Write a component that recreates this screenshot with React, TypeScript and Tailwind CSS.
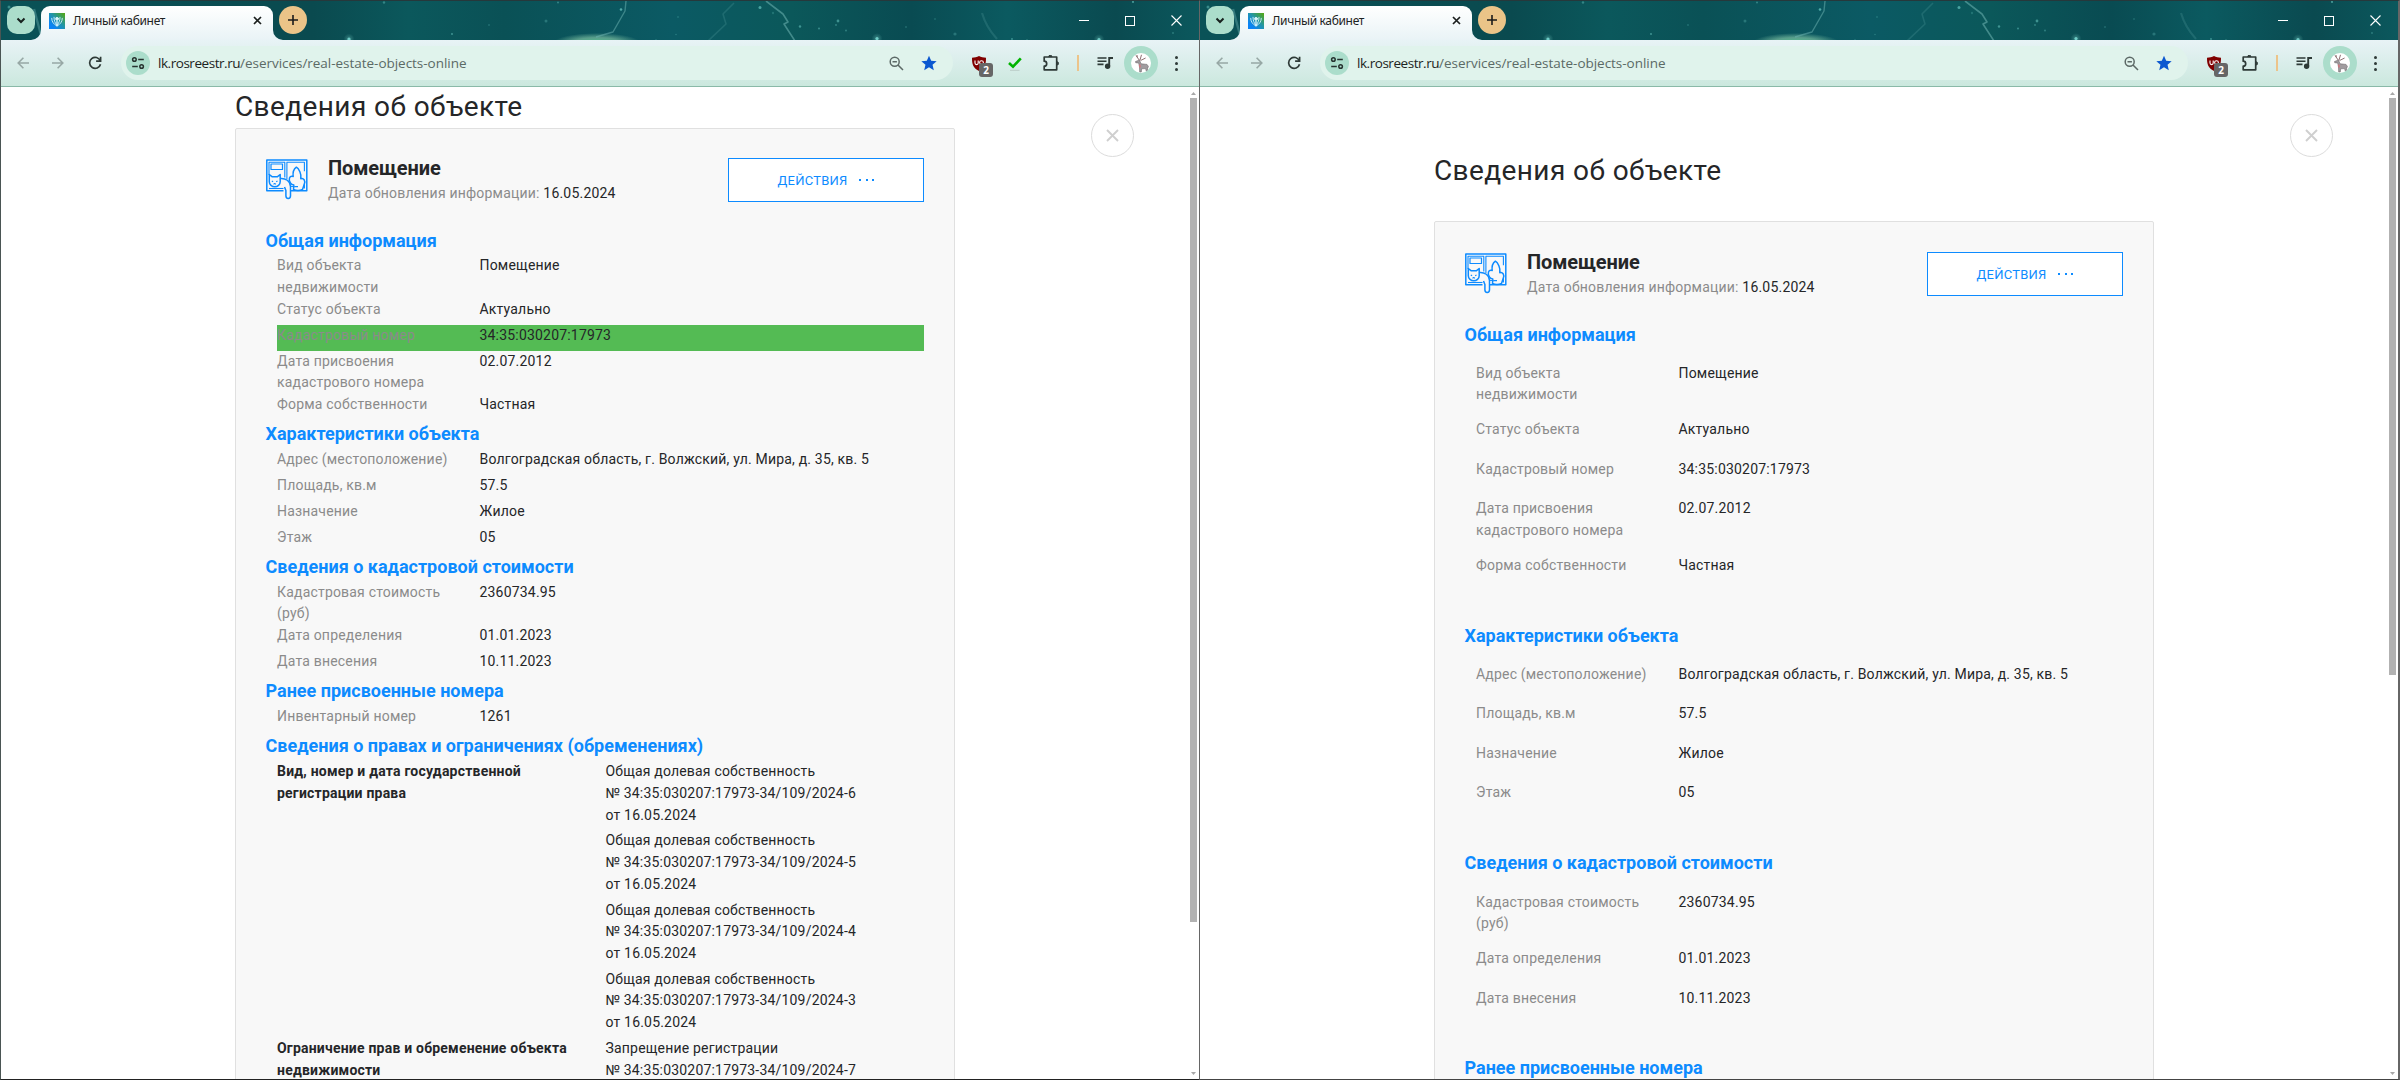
import type { ReactNode } from "react";

type Row = { label: ReactNode; value: string; marked?: boolean };
type Section = { title: string; rows: Row[] };

const sections: Section[] = [
  {
    title: "Общая информация",
    rows: [
      { label: <>Вид объекта<br />недвижимости</>, value: "Помещение" },
      { label: "Статус объекта", value: "Актуально" },
      { label: "Кадастровый номер", value: "34:35:030207:17973", marked: true },
      { label: <>Дата присвоения<br />кадастрового номера</>, value: "02.07.2012" },
      { label: "Форма собственности", value: "Частная" },
    ],
  },
  {
    title: "Характеристики объекта",
    rows: [
      { label: "Адрес (местоположение)", value: "Волгоградская область, г. Волжский, ул. Мира, д. 35, кв. 5" },
      { label: "Площадь, кв.м", value: "57.5" },
      { label: "Назначение", value: "Жилое" },
      { label: "Этаж", value: "05" },
    ],
  },
  {
    title: "Сведения о кадастровой стоимости",
    rows: [
      { label: <>Кадастровая стоимость<br />(руб)</>, value: "2360734.95" },
      { label: "Дата определения", value: "01.01.2023" },
      { label: "Дата внесения", value: "10.11.2023" },
    ],
  },
  {
    title: "Ранее присвоенные номера",
    rows: [{ label: "Инвентарный номер", value: "1261" }],
  },
];

const rights = [6, 5, 4, 3];

/* ---------- browser chrome ---------- */

const stars: [number, number, number, number][] = [
  [348, 38, 1.6, 0.8], [383, 1.5, 1.2, 0.35], [451, 33, 0.9, 0.5], [488, 24, 1, 0.2], [545, 20, 1.5, 0.25],
  [557, 1.5, 1, 0.35], [620, 8.5, 1.3, 0.6], [677, 16, 0.8, 0.3], [675, 33.5, 0.7, 0.3], [655, 39, 0.7, 0.4],
  [759, 6.5, 1.5, 0.55], [772, 12, 1.2, 0.2], [799, 25.5, 1.2, 0.45], [818, 27.5, 1, 0.4], [837, 20, 1.4, 0.45],
  [835, 24, 0.9, 0.35], [845, 29.5, 0.9, 0.35], [876, 37.5, 1.6, 0.8], [905, 26, 0.8, 0.35], [934, 18, 0.8, 0.3],
  [954, 33, 1.6, 0.25], [1011, 38, 0.9, 0.45], [1026, 39, 0.8, 0.4], [1098, 38.5, 1.6, 0.8], [1132, 1, 1.1, 0.5],
  [1172, 32, 0.9, 0.3], [8, 6, 1.5, 0.4],
];

function Sky() {
  return (
    <svg className="absolute inset-0 h-full w-full" viewBox="0 0 1198 39" preserveAspectRatio="none" aria-hidden>
      <defs>
        <linearGradient id="sky" x1="0" x2="1" y1="0" y2="0">
          <stop offset="0" stopColor="#0a5257" />
          <stop offset="0.26" stopColor="#0a4a4f" />
          <stop offset="0.34" stopColor="#0b585c" />
          <stop offset="0.42" stopColor="#0a5156" />
          <stop offset="0.56" stopColor="#0b5a64" />
          <stop offset="0.66" stopColor="#0b585a" />
          <stop offset="0.76" stopColor="#094b52" />
          <stop offset="0.84" stopColor="#0b5a60" />
          <stop offset="0.93" stopColor="#0a4a50" />
          <stop offset="1" stopColor="#0b585d" />
        </linearGradient>
        <radialGradient id="glow">
          <stop offset="0" stopColor="#4fc08b" />
          <stop offset="0.55" stopColor="#79bd9f" stopOpacity="0.7" />
          <stop offset="1" stopColor="#79bd9f" stopOpacity="0" />
        </radialGradient>
        <radialGradient id="halo">
          <stop offset="0" stopColor="#7fd6cc" stopOpacity="0.4" />
          <stop offset="1" stopColor="#7fd6cc" stopOpacity="0" />
        </radialGradient>
      </defs>
      <rect width="1198" height="39" fill="url(#sky)" />
      <ellipse cx="596" cy="42" rx="44" ry="10" fill="url(#glow)" />
      <g fill="none" stroke="#6fb5b3" strokeLinejoin="round">
        <path d="M625 0 624 10 612 31 605 33 595 36" strokeWidth="1.4" opacity="0.5" />
        <path d="M733 2 722 13 725 23 707 40" strokeWidth="1.6" opacity="0.2" />
        <path d="M765 0 782 13 787 21 783 23 794 40" strokeWidth="1.6" opacity="0.55" />
        <path d="M981 12Q985 26 996 38" strokeWidth="2.2" opacity="0.2" />
        <path d="M33 8 40 34" strokeWidth="2.4" opacity="0.4" />
      </g>
      {stars.map(([x, y, r, o]) => (
        <g key={x}>
          {o > 0.7 && <circle cx={x} cy={y} r={r * 3.4} fill="url(#halo)" />}
          <circle cx={x} cy={y} r={r} fill="#7ee0d8" opacity={o} />
        </g>
      ))}
    </svg>
  );
}

function Favicon() {
  return (
    <svg width="16" height="16" viewBox="0 0 16 16" className="shrink-0">
      <defs>
        <linearGradient id="fav" x1="0" y1="1" x2="1" y2="0">
          <stop offset="0.2" stopColor="#0a83f5" />
          <stop offset="0.55" stopColor="#2295a8" />
          <stop offset="0.95" stopColor="#4fa61c" />
        </linearGradient>
      </defs>
      <rect width="16" height="16" fill="url(#fav)" />
      <g fill="none" stroke="#d9f4fb" strokeWidth="0.9" strokeLinecap="round">
        <path d="M8 13C4.600 11.300 2.700 8.600 2.700 5.300M8 13c3.400-1.700 5.300-4.400 5.300-7.700" />
        <path d="M8 12.500C6 10 5 7.500 5 4.300M8 12.500c2-2.500 3-5 3-8.200" />
        <path d="M8 12V8" strokeWidth="1.300" />
        <circle cx="8" cy="5.800" r="1.400" fill="#d9f4fb" />
      </g>
    </svg>
  );
}

function TabStrip() {
  return (
    <div className="relative h-[39px] shrink-0">
      <Sky />
      <div className="relative flex h-full items-start pt-[5px]">
        <div className="ml-[6px] flex h-7 w-7 items-center justify-center rounded-[10px] bg-[#abddcb]">
          <svg width="10" height="7" viewBox="0 0 10 7" fill="none" stroke="#16201d" strokeWidth="2">
            <path d="M1.500 1.500 5 5l3.500-3.500" />
          </svg>
        </div>
        <div className="relative ml-[6px] flex h-[34px] w-[232px] items-center rounded-t-[9px] bg-linear-to-b from-white to-[#e9f3f6] pr-[11px] pb-[4px] pl-2">
          <svg className="absolute bottom-0 -left-[10px]" width="10" height="10" viewBox="0 0 10 10" fill="#e9f3f6">
            <path d="M10 0v10H0A10 10 0 0 0 10 0" />
          </svg>
          <svg className="absolute -right-[10px] bottom-0" width="10" height="10" viewBox="0 0 10 10" fill="#e9f3f6">
            <path d="M0 0v10h10A10 10 0 0 1 0 0" />
          </svg>
          <Favicon />
          <span className="ml-2 flex-1 font-['Noto_Sans',sans-serif] text-[12px] leading-4 tracking-[-0.34px] whitespace-nowrap text-[#1d2322]">
            Личный кабинет
          </span>
          <svg width="9" height="9" viewBox="0 0 9 9" stroke="#1b1f1e" strokeWidth="1.700" className="mb-[1px]">
            <path d="M1 1l7 7M8 1 1 8" />
          </svg>
        </div>
        <div className="ml-[6px] flex h-7 w-7 items-center justify-center rounded-full bg-[#ebc488]">
          <svg width="10" height="10" viewBox="0 0 10 10" stroke="#1b1b1b" strokeWidth="1.600">
            <path d="M5 0v10M0 5h10" />
          </svg>
        </div>
        <div className="mt-[9px] mr-[17px] ml-auto flex items-center gap-9 text-white">
          <span className="h-px w-[10px] bg-white" />
          <span className="h-[10px] w-[10px] border border-white" />
          <svg width="11" height="11" viewBox="0 0 11 11" stroke="#fff" strokeWidth="1.100">
            <path d="M.5.5l10 10M10.500.5l-10 10" />
          </svg>
        </div>
      </div>
    </div>
  );
}

function Arrow({ back }: { back?: boolean }) {
  return (
    <svg width="12" height="12" viewBox="0 0 12 12" fill="none" stroke="#97a8a5" strokeWidth="1.600" className={back ? "" : "rotate-180"}>
      <path d="M12 6H1.200M6.400.8 1.200 6l5.200 5.200" />
    </svg>
  );
}

function Deer() {
  return (
    <svg width="20" height="20" viewBox="0 0 20 20" className="rounded-full">
      <rect width="20" height="20" fill="#fff" />
      <g fill="#a09c9f" stroke="#6f6a6d" strokeWidth="0.600">
        <path d="M4.500 8.500 8.500 7l1.500 3.800 6 .6 1.400 2-.8 2 .3 3h-1.500l-.8-2.800-4 .2-.3 3.200H8.700l-.2-5-.8-4-3-.3z" />
      </g>
      <path d="M8.300 7.200 5 2.500M9 7l1.500-5.200M9.600 7.500l5-2.500M6.200 4.200 6 2" stroke="#8d6f72" strokeWidth="1" fill="none" />
      <path d="M8.600 11.500l.6 3" stroke="#d2757c" strokeWidth="1.500" />
    </svg>
  );
}

function Toolbar({ hasCheck }: { hasCheck?: boolean }) {
  return (
    <div className="flex h-[47px] shrink-0 items-center border-b border-[#8ab9a8] bg-linear-to-b from-[#e8f3f6] to-[#cbe8de]">
      <div className="flex w-[120px] shrink-0 items-center pl-4">
        <Arrow back />
        <span className="ml-[23px]"><Arrow /></span>
        <svg width="14" height="14" viewBox="0 0 14 14" fill="none" stroke="#2e3a37" strokeWidth="1.700" className="ml-6">
          <path d="M12.300 4.900A5.500 5.500 0 1 0 12.500 8.200" />
          <path d="M12.600.7v4.500H8.100" />
        </svg>
      </div>
      <div className="flex h-[34px] flex-1 items-center rounded-full bg-[#e0f3ec] pr-4 pl-[5px]">
        <span className="flex h-6 w-6 items-center justify-center rounded-full bg-[#abddcb]">
          <svg width="14" height="14" viewBox="0 0 14 14" fill="none" stroke="#26322f" strokeWidth="1.500">
            <circle cx="3.400" cy="3.500" r="1.800" />
            <path d="M7.200 3.500h5.600M1.200 10.500h5.600" />
            <circle cx="10.600" cy="10.500" r="1.800" />
          </svg>
        </span>
        <span className="ml-2 flex-1 font-['Open_Sans',sans-serif] text-[13.500px] leading-5 whitespace-nowrap text-[#5b6a66]">
          <span className="tracking-[-0.46px] text-[#1c2422]">lk.rosreestr.ru</span>
          <span className="tracking-[-0.03px]">/eservices/real-estate-objects-online</span>
        </span>
        <svg width="15" height="15" viewBox="0 0 15 15" fill="none" stroke="#5c6966" strokeWidth="1.500">
          <circle cx="5.700" cy="5.700" r="4.500" />
          <path d="M9 9l5 5M3.500 5.700h4.400" />
        </svg>
        <svg width="16" height="16" viewBox="0 0 24 24" fill="#0b57d0" className="ml-[17px]">
          <path d="M12 1l3.300 7.600 8.200.7-6.200 5.400 1.900 8L12 18.400l-7.200 4.300 1.900-8L.5 9.300l8.200-.7z" />
        </svg>
      </div>
      <div className="ml-2 flex items-center">
        <span className="relative flex h-9 w-9 items-center justify-center">
          <svg width="14" height="15" viewBox="0 0 14 15">
            <path d="M7 0c2 1.300 4.500 1.700 7 1.700 0 6-.8 10-7 13.300C.8 11.700 0 7.700 0 1.700 2.500 1.700 5 1.300 7 0" fill="#800000" />
            <path d="M3 4.500v2.500q0 1.600 1.600 1.600T6.200 7V4.500" fill="none" stroke="#fff" strokeWidth="1.100" />
            <circle cx="9.500" cy="6.600" r="1.900" fill="none" stroke="#fff" strokeWidth="1.100" />
          </svg>
          <span className="absolute top-[18px] left-[18px] flex h-[14px] w-[14px] items-center justify-center rounded-[3px] bg-[#666] font-['Open_Sans',sans-serif] text-[10px] leading-none font-bold text-white">
            2
          </span>
        </span>
        {hasCheck && (
          <span className="flex h-9 w-9 items-center justify-center">
            <svg width="16" height="16" viewBox="0 0 16 16" fill="none">
              <path d="M2 8l4 3.700L13.800 3.300" stroke="#00b300" strokeWidth="2.600" />
              <path d="M3 15.300h9.500" stroke="#b9c9c5" strokeWidth="0.900" />
            </svg>
          </span>
        )}
        <span className="flex h-9 w-9 items-center justify-center">
          <svg width="17" height="16" viewBox="0 0 17 16" fill="none" stroke="#2e3a37" strokeWidth="1.700" strokeLinejoin="round">
            <path d="M1.200 2h12.500v12.800H1.200v-3.600a2.400 2.400 0 0 0 0-5z" />
            <path d="M5.700 1.600a1.600 1.300 0 0 1 3.200 0zM14.200 6.800a1.300 1.600 0 0 1 0 3.200z" fill="#2e3a37" strokeWidth="1" />
          </svg>
        </span>
        <span className="mx-2 h-4 w-[2px] bg-[#ecc48a]" />
        <span className="flex h-9 w-9 items-center justify-center">
          <svg width="16" height="14" viewBox="0 0 16 14" fill="none" stroke="#2e3a37" strokeWidth="1.600">
            <path d="M.5 2h9M.5 5.200h9M.5 8.400h6" />
            <circle cx="10.600" cy="10.300" r="1.900" fill="#2e3a37" />
            <path d="M12.200 10.300V2H16" strokeWidth="1.900" />
          </svg>
        </span>
        <span className="ml-px flex h-[34px] w-[34px] items-center justify-center rounded-full bg-[#abddcb]">
          <Deer />
        </span>
        <span className="mr-[21px] ml-[17px] flex flex-col gap-[3px]">
          <i className="h-[3px] w-[3px] rounded-full bg-[#2e3a37]" />
          <i className="h-[3px] w-[3px] rounded-full bg-[#2e3a37]" />
          <i className="h-[3px] w-[3px] rounded-full bg-[#2e3a37]" />
        </span>
      </div>
    </div>
  );
}

/* ---------- page ---------- */

function RoomIcon() {
  return (
    <svg width="42" height="41" viewBox="0 0 42 41" fill="none" stroke="#0d8bff" strokeWidth="1.500" strokeLinejoin="round" className="mt-px shrink-0">
      <path d="M17.500 31.800H.8V.9h40v30.900H24.500" />
      <path d="M3 16V3.300h15.800v15.200M20.900 20V3.300h17.500v9M38.400 25v4.500" strokeWidth="1.100" />
      <path d="M5 5h11.500v5.500H5z" strokeWidth="1.200" />
      <path d="M3 29.500h14.500" strokeWidth="1.100" />
      <path d="M3.300 15.500l3 2.300h4.900l3-2.300v7.200c0 3-2.600 5-5.400 5s-5.500-2-5.500-5z" />
      <path d="M5.800 22l1.300.7M11.500 22l-1.300.7M7.500 25.200l1.200-.7 1.200.7" strokeWidth="1.100" />
      <path d="M14.200 19.500c5.500-.5 10 2.500 10.300 8v9.300c0 3.500-4.600 3.500-4.600 0V31.500L18.500 28" />
      <path d="M27.500 30.500c2.500 1 6.500 1 9 0l1.600-4.800c2-4.200-.8-7-3.300-6 1-4.500-2-10.200-4.400-11.500-2.500 1.800-3.800 5-3.200 9.300-4-1-5 3-2.800 6.300 1 1.600 2.200 2 3.400 2.200z" />
      <path d="M24.500 27.300c3 .8 5 .2 7.500.3" strokeWidth="1.100" />
    </svg>
  );
}

function SectionTitle({ children }: { children: ReactNode }) {
  return <h3 className="h-[28.800px] text-[18px] leading-[28px] font-bold tracking-normal text-[#0d8bff]">{children}</h3>;
}

function Person({ compact }: { compact?: boolean }) {
  return (
    <main
      className={
        compact
          ? "relative min-h-0 flex-1 overflow-hidden bg-white font-[Roboto,sans-serif] text-[14px] leading-[21.7px] tracking-[0.19px] text-[#252628]"
          : "relative min-h-0 flex-1 overflow-hidden bg-white font-[Roboto,sans-serif] text-[14px] leading-[21.5px] tracking-[0.19px] text-[#252628]"
      }
    >
      <div className={compact ? "ml-[234px] w-[720px]" : "ml-[234px] w-[720px] pt-[63.5px]"}>
        <h1 className={compact ? "mb-px text-[28px] leading-10 tracking-[0.4px]" : "mb-[30.5px] text-[28px] leading-10 tracking-[0.4px]"}>
          Сведения об объекте
        </h1>
        <article className="h-[1100px] rounded-t-[2px] border border-[#e0e0e0] bg-[#f8f8f8] pr-[30px] pl-[29.5px]">
          <header className={compact ? "flex h-[97.5px] items-start pt-[29px]" : "flex h-[98.6px] items-start pt-[30px]"}>
            <RoomIcon />
            <div className="ml-[20.5px] flex-1">
              <h2 className="text-[20px] leading-5 font-bold tracking-[-0.1px]">Помещение</h2>
              <p className="mt-[5px] leading-5 tracking-[0.2px] text-[#8b8b8b]">
                Дата обновления информации: <span className="text-[#252628]">16.05.2024</span>
              </p>
            </div>
            <button className="flex h-11 w-[196px] items-center justify-center border border-[#0d8bff] bg-white pt-px text-[13px] tracking-[0.23px] text-[#0d8bff]">
              ДЕЙСТВИЯ
              <span className="ml-3 flex gap-[4.500px] pb-[2px]">
                <i className="h-[2px] w-[2px] bg-[#0d8bff]" />
                <i className="h-[2px] w-[2px] bg-[#0d8bff]" />
                <i className="h-[2px] w-[2px] bg-[#0d8bff]" />
              </span>
            </button>
          </header>

          {sections.map((s) => (
            <section key={s.title} className={compact ? "" : "mb-[40.8px]"}>
              <SectionTitle>{s.title}</SectionTitle>
              <dl className="ml-[11.5px]">
                {s.rows.map((r) => (
                  <div
                    key={r.value}
                    className={
                      compact
                        ? r.marked
                          ? "flex min-h-[26px] bg-[#54bb54]"
                          : "flex min-h-[26px]"
                        : "mt-[13.5px] flex min-h-[26px]"
                    }
                  >
                    <dt className="w-[202.5px] shrink-0 text-[#8b8b8b]">{r.label}</dt>
                    <dd>{r.value}</dd>
                  </div>
                ))}
              </dl>
            </section>
          ))}

          {compact && (
            <section>
              <SectionTitle>Сведения о правах и ограничениях (обременениях)</SectionTitle>
              <dl className="ml-[11.5px] pt-[0.4px]">
                <div className="flex">
                  <dt className="w-[328.5px] shrink-0 font-bold tracking-[0.21px]">
                    Вид, номер и дата государственной
                    <br />
                    регистрации права
                  </dt>
                  <dd>
                    {rights.map((n) => (
                      <p key={n} className="mb-[4.1px]">
                        Общая долевая собственность
                        <br />№ 34:35:030207:17973-34/109/2024-{n}
                        <br />
                        от 16.05.2024
                      </p>
                    ))}
                  </dd>
                </div>
                <div className="flex">
                  <dt className="w-[328.5px] shrink-0 font-bold tracking-[0.21px]">
                    Ограничение прав и обременение объекта
                    <br />
                    недвижимости
                  </dt>
                  <dd>
                    Запрещение регистрации
                    <br />№ 34:35:030207:17973-34/109/2024-7
                  </dd>
                </div>
              </dl>
            </section>
          )}
        </article>
      </div>

      <button className="absolute top-[27px] right-[65px] flex h-[43px] w-[43px] items-center justify-center rounded-full border border-[#dcdcdc]">
        <svg width="13" height="13" viewBox="0 0 13 13" stroke="#cfcfcf" strokeWidth="1.900">
          <path d="M1 1l11 11M12 1 1 12" />
        </svg>
      </button>

      <div className="absolute inset-y-0 right-[2px] flex w-[7px] flex-col items-center pt-[5px] pb-[4px]">
        <svg width="5" height="3" viewBox="0 0 5 3" fill="#a8a8a8"><path d="M2.500 0 5 3H0z" /></svg>
        <div className={compact ? "mt-[3px] h-[824px] w-full bg-[#b2b2b2]" : "mt-[3px] h-[577px] w-full bg-[#b2b2b2]"} />
        <svg width="5" height="3" viewBox="0 0 5 3" fill="#a8a8a8" className="mt-auto"><path d="M2.500 3 5 0H0z" /></svg>
      </div>
    </main>
  );
}

function Window({ compact }: { compact?: boolean }) {
  return (
    <div
      className={
        compact
          ? "flex h-full w-[1199px] flex-col border-t border-b border-l border-t-[#26383b] border-b-[#222] border-l-[#4a5553]"
          : "flex h-full w-[1201px] flex-col border border-r-2 border-t-[#26383b] border-r-[#666] border-b-[#444] border-l-[#666]"
      }
    >
      <TabStrip />
      <Toolbar hasCheck={compact} />
      <Person compact={compact} />
    </div>
  );
}

export default function App() {
  return (
    <div className="flex h-[1080px] w-[2400px] overflow-hidden bg-white">
      <Window compact />
      <Window />
    </div>
  );
}
